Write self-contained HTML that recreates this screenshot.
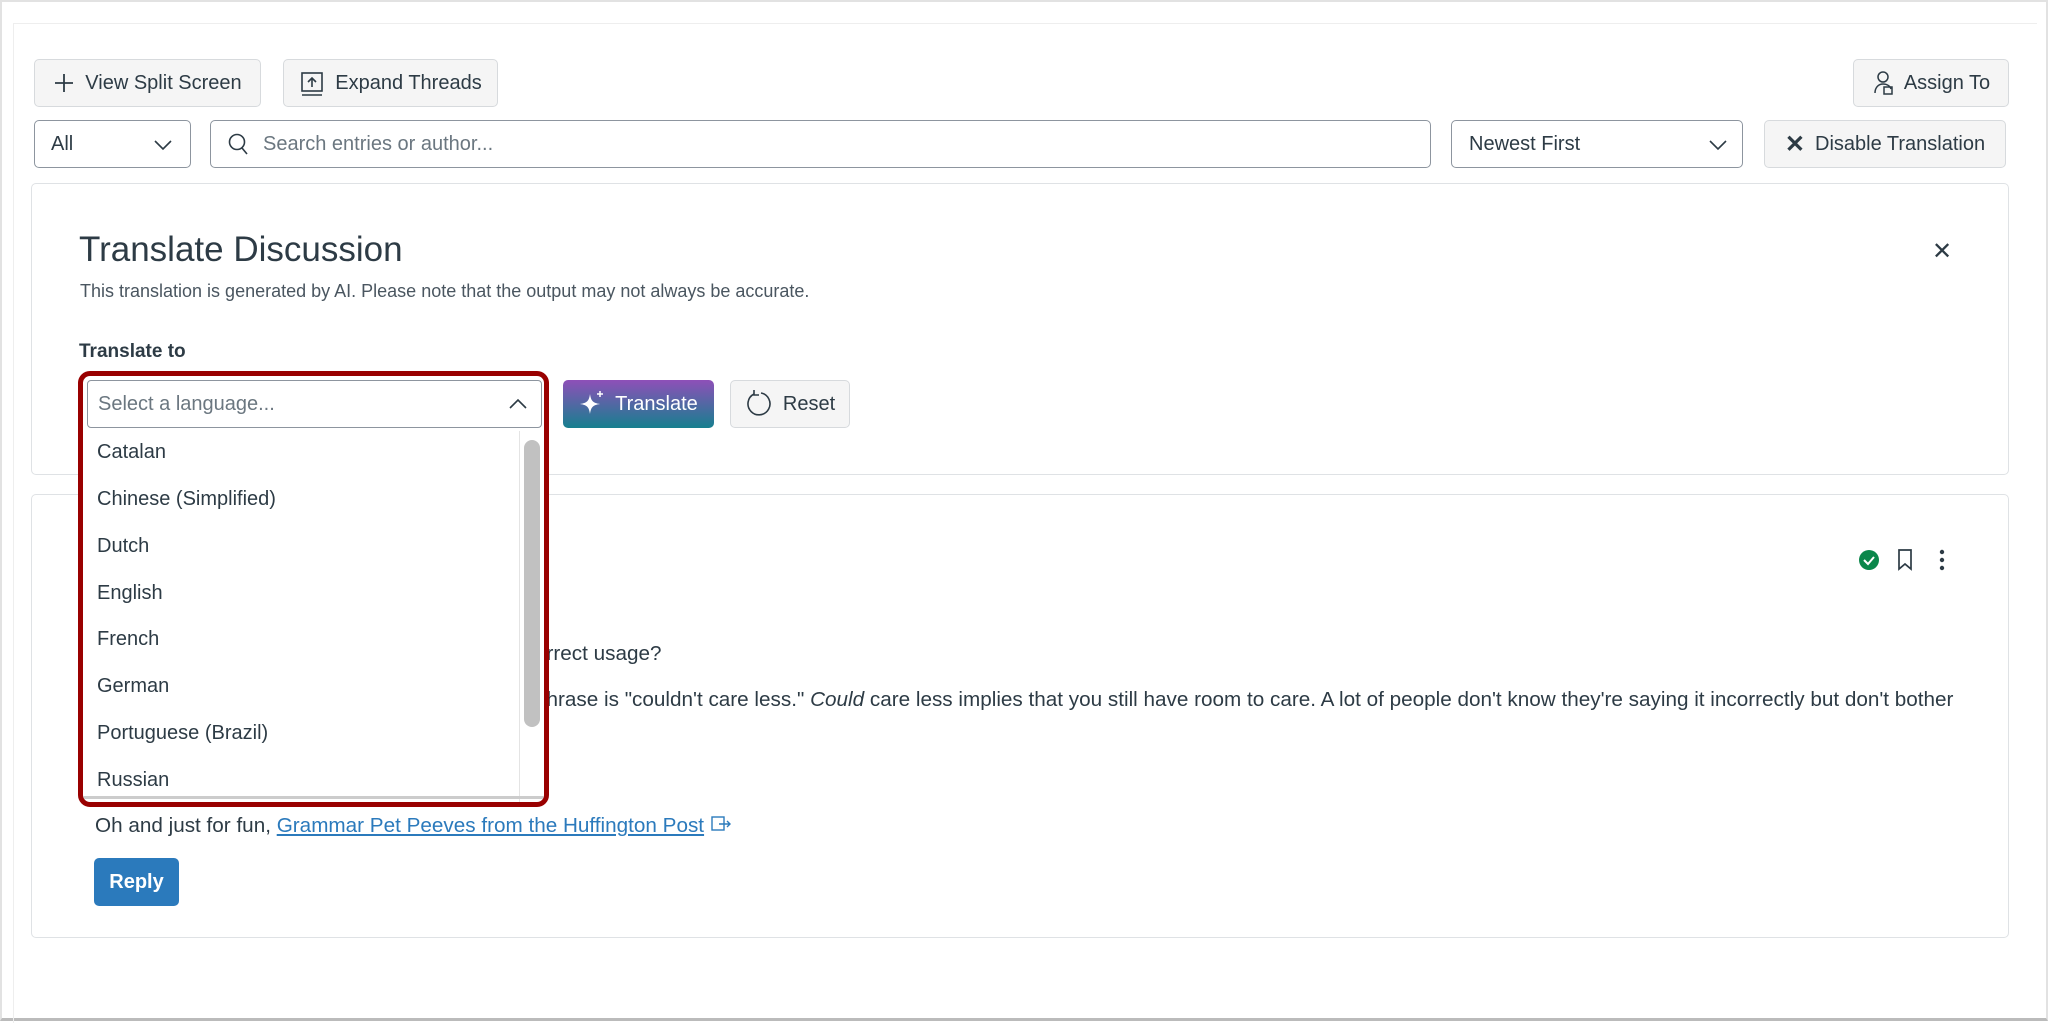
<!DOCTYPE html>
<html><head><meta charset="utf-8"><style>
*{box-sizing:border-box;margin:0;padding:0}
body{width:2048px;height:1021px;background:#fff;font-family:"Liberation Sans",sans-serif;color:#2d3b45;position:relative;overflow:hidden}
.a{position:absolute}
.btn{position:absolute;background:#f5f5f5;border:1px solid #d7dadd;border-radius:5px;font-size:20px;display:flex;align-items:center;justify-content:center;gap:10px;color:#2d3b45}
.inp{position:absolute;background:#fff;border:1px solid #8d959f;border-radius:5px;font-size:20px;display:flex;align-items:center}
.panel{position:absolute;border:1px solid #dfe2e5;border-radius:5px;background:#fff}
.it{position:absolute;left:97px;font-size:20px;color:#2d3b45}
</style></head><body>
<div class="a" style="left:0;top:0;width:2048px;height:1021px;border:2px solid #e2e2e2;border-bottom:3px solid #bbb"></div>
<div class="a" style="left:13px;top:23px;width:2024px;height:1px;background:#eee"></div>
<div class="a" style="left:13px;top:23px;width:1px;height:1000px;background:#eee"></div>

<div class="btn" style="left:34px;top:59px;width:227px;height:48px"><svg width="22" height="22"><path d="M11 2v18M2 11h18" stroke="#2d3b45" stroke-width="1.8"/></svg>View Split Screen</div>
<div class="btn" style="left:283px;top:59px;width:215px;height:48px"><svg width="26" height="26"><rect x="3" y="3" width="20" height="18" fill="none" stroke="#2d3b45" stroke-width="1.6"/><path d="M13 17V8M9 12l4-4 4 4M3 25h20" stroke="#2d3b45" stroke-width="1.6" fill="none"/></svg>Expand Threads</div>
<div class="btn" style="left:1853px;top:59px;width:156px;height:48px"><svg width="22" height="28"><circle cx="11" cy="8" r="5" fill="none" stroke="#2d3b45" stroke-width="1.5"/><path d="M3 24c0-6 4-9 8-9s7 2 8 5" fill="none" stroke="#2d3b45" stroke-width="1.5"/><rect x="12" y="18" width="8" height="7" fill="none" stroke="#2d3b45" stroke-width="1.5"/></svg>Assign To</div>

<div class="inp" style="left:34px;top:120px;width:157px;height:48px;padding-left:16px">All<svg class="a" style="left:118px;top:17px" width="20" height="14"><path d="M2 3l8 8 8-8" fill="none" stroke="#2d3b45" stroke-width="1.6"/></svg></div>
<div class="inp" style="left:210px;top:120px;width:1221px;height:48px;padding-left:16px;color:#6b7780"><svg width="22" height="24" style="margin-right:14px"><circle cx="10" cy="10" r="7.5" fill="none" stroke="#2d3b45" stroke-width="1.6"/><path d="M15 16l5 6" stroke="#2d3b45" stroke-width="1.6"/></svg>Search entries or author...</div>
<div class="inp" style="left:1451px;top:120px;width:292px;height:48px;padding-left:17px">Newest First<svg class="a" style="left:256px;top:17px" width="20" height="14"><path d="M2 3l8 8 8-8" fill="none" stroke="#2d3b45" stroke-width="1.6"/></svg></div>
<div class="btn" style="left:1764px;top:120px;width:242px;height:48px"><span style="font-weight:bold;font-size:24px">✕</span>Disable Translation</div>

<div class="panel" style="left:31px;top:183px;width:1978px;height:292px"></div>
<div class="a" style="left:79px;top:230px;font-size:35px;color:#2d3b45">Translate Discussion</div>
<div class="a" style="left:80px;top:281px;font-size:18px;color:#4a5660">This translation is generated by AI. Please note that the output may not always be accurate.</div>
<div class="a" style="left:1932px;top:237px;font-size:24px">✕</div>
<div class="a" style="left:79px;top:341px;font-size:19px;font-weight:bold">Translate to</div>

<div class="btn" style="left:563px;top:380px;width:151px;height:48px;border:none;color:#fff;background:linear-gradient(#8e4fb8,#167f8f)"><svg width="26" height="28"><path d="M11 4c1 7 3 9 10 10-7 1-9 3-10 10-1-7-3-9-10-10 7-1 9-3 10-10z" fill="#fff"/><path d="M21 1v6M18 4h6" stroke="#fff" stroke-width="1.5"/></svg>Translate</div>
<div class="btn" style="left:730px;top:380px;width:120px;height:48px"><svg width="28" height="30"><path d="M9 5A11 11 0 1 0 16 4" fill="none" stroke="#2d3b45" stroke-width="1.6"/><path d="M9 1v5h5" fill="none" stroke="#2d3b45" stroke-width="1.6"/></svg>Reset</div>

<div class="panel" style="left:31px;top:494px;width:1978px;height:444px"></div>
<svg class="a" style="left:1858px;top:549px" width="22" height="22"><circle cx="11" cy="11" r="10" fill="#0b874b"/><path d="M6 11l4 4 6-7" fill="none" stroke="#fff" stroke-width="2"/></svg>
<svg class="a" style="left:1896px;top:548px" width="18" height="24"><path d="M3 2h12v19l-6-5-6 5z" fill="none" stroke="#2d3b45" stroke-width="1.7"/></svg>
<svg class="a" style="left:1938px;top:548px" width="8" height="24"><circle cx="4" cy="4" r="2.2" fill="#2d3b45"/><circle cx="4" cy="12" r="2.2" fill="#2d3b45"/><circle cx="4" cy="20" r="2.2" fill="#2d3b45"/></svg>
<div class="a" style="left:535px;top:642px;font-size:20.7px">orrect usage?</div>
<div class="a" style="left:535px;top:688px;font-size:20.7px;white-space:nowrap">phrase is "couldn't care less." <i>Could</i> care less implies that you still have room to care. A lot of people don't know they're saying it incorrectly but don't bother</div>
<div class="a" style="left:95px;top:814px;font-size:20.7px;white-space:nowrap">Oh and just for fun, <span style="color:#2b7abc;text-decoration:underline">Grammar Pet Peeves from the Huffington Post</span> <svg width="22" height="18"><rect x="2" y="3" width="12" height="13" fill="none" stroke="#2b7abc" stroke-width="1.4"/><path d="M9 10h11M17 7l3 3-3 3" fill="none" stroke="#2b7abc" stroke-width="1.4"/></svg></div>
<div class="btn" style="left:94px;top:858px;width:85px;height:48px;background:#2b7abc;border:none;color:#fff;font-weight:bold">Reply</div>

<div class="a" style="left:78px;top:371px;width:471px;height:436px;border:5px solid #990000;border-radius:12px;background:#fff;overflow:hidden">
 <div class="a" style="left:4px;top:4px;width:455px;height:48px;border:1px solid #8d959f;border-radius:4px;font-size:20px;color:#6b7780;padding:12px 0 0 10px">Select a language...<svg class="a" style="left:420px;top:16px" width="20" height="14"><path d="M2 11l8-8 8 8" fill="none" stroke="#2d3b45" stroke-width="1.6"/></svg></div>
 <div class="a" style="left:436px;top:55px;width:1px;height:380px;background:#e4e4e4"></div>
 <div class="a" style="left:441px;top:64px;width:16px;height:287px;border-radius:8px;background:#c1c1c1"></div>
 <div class="a" style="left:0;top:420px;width:461px;height:3px;background:#ccc"></div>
</div>
<div class="it" style="top:441px">Catalan</div>
<div class="it" style="top:488px">Chinese (Simplified)</div>
<div class="it" style="top:535px">Dutch</div>
<div class="it" style="top:582px">English</div>
<div class="it" style="top:628px">French</div>
<div class="it" style="top:675px">German</div>
<div class="it" style="top:722px">Portuguese (Brazil)</div>
<div class="it" style="top:769px">Russian</div>
</body></html>
